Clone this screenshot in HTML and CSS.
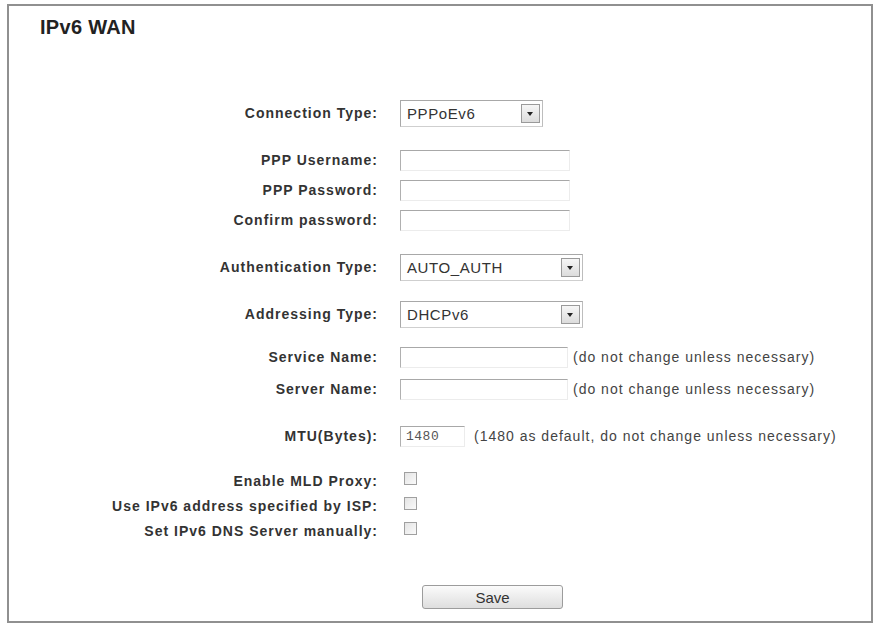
FILE: index.html
```html
<!DOCTYPE html>
<html lang="en">
<head>
    <meta charset="UTF-8" />
    <title>IPv6 WAN</title>
    <link rel="stylesheet" href="styles.css">
</head>
<body>

<div class="frame">
    <h2 class="title">IPv6 WAN</h2>

    <div class="form">
        <div class="row">
            <label class="label">Connection Type:</label>
            <div class="select select-short">
                <span class="select-value">PPPoEv6</span>
                <span class="select-arrow"></span>
            </div>
        </div>

        <div class="row gap-lg">
            <label class="label">PPP Username:</label>
            <input class="text" type="text" />
        </div>
        <div class="row">
            <label class="label">PPP Password:</label>
            <input class="text" type="password" />
        </div>
        <div class="row">
            <label class="label">Confirm password:</label>
            <input class="text" type="password" />
        </div>

        <div class="row gap-lg">
            <label class="label">Authentication Type:</label>
            <div class="select">
                <span class="select-value">AUTO_AUTH</span>
                <span class="select-arrow"></span>
            </div>
        </div>

        <div class="row gap-lg">
            <label class="label">Addressing Type:</label>
            <div class="select">
                <span class="select-value">DHCPv6</span>
                <span class="select-arrow"></span>
            </div>
        </div>

        <div class="row gap-md">
            <label class="label">Service Name:</label>
            <input class="text text-name" type="text" />
            <span class="hint">(do not change unless necessary)</span>
        </div>
        <div class="row gap-xs">
            <label class="label">Server Name:</label>
            <input class="text text-name" type="text" />
            <span class="hint">(do not change unless necessary)</span>
        </div>

        <div class="row gap-lg">
            <label class="label">MTU(Bytes):</label>
            <input class="text text-mtu" type="text" value="1480" />
            <span class="hint hint-mtu">(1480 as default, do not change unless necessary)</span>
        </div>

        <div class="row row-check gap-lg">
            <label class="label">Enable MLD Proxy:</label>
            <span class="check"></span>
        </div>
        <div class="row row-check">
            <label class="label">Use IPv6 address specified by ISP:</label>
            <span class="check"></span>
        </div>
        <div class="row row-check">
            <label class="label">Set IPv6 DNS Server manually:</label>
            <span class="check"></span>
        </div>

        <div class="actions">
            <button class="save">Save</button>
        </div>
    </div>
</div>

</body>
</html>
```

FILE: styles.css
```css
* {
    box-sizing: border-box;
}
body {
    margin: 0;
    background: #ffffff;
    font-family: "Liberation Sans", Arial, sans-serif;
    color: #333;
}
.frame {
    margin: 4px 3px 2px 7px;
    height: 619px;
    border: 2px solid #909090;
    background: #fff;
}
.title {
    margin: 11px 0 0 31px;
    font-size: 20px;
    line-height: 20px;
    font-weight: 700;
    letter-spacing: 0.3px;
    color: #222;
}
.form {
    margin-top: 61px;
}
.row {
    display: flex;
    align-items: center;
    height: 30px;
}
.row-check {
    height: 25px;
}
.gap-lg {
    margin-top: 17px;
}
.gap-md {
    margin-top: 13px;
}
.gap-xs {
    margin-top: 2px;
}
.label {
    flex-shrink: 0;
    width: 391px;
    padding-right: 22px;
    text-align: right;
    font-size: 14px;
    font-weight: 700;
    letter-spacing: 1px;
    color: #333;
}

/* text fields: sunken look, dark top/left edge */
.text {
    width: 170px;
    height: 21px;
    margin: 0;
    padding: 1px 5px;
    border: 1px solid;
    border-color: #a8a8a8 #ececec #ececec #b0b0b0;
    background: #fff;
    font-family: "Liberation Sans", Arial, sans-serif;
    font-size: 13px;
    outline: none;
}
.text-name {
    width: 168px;
}
.text-mtu {
    width: 65px;
    font-family: "Liberation Mono", "Courier New", monospace;
    font-size: 13px;
    color: #555;
    letter-spacing: 0.5px;
}
.hint {
    margin-left: 5px;
    font-size: 14px;
    letter-spacing: 1px;
    color: #444;
}
.hint-mtu {
    margin-left: 9px;
}

/* drop-down box */
.select {
    display: flex;
    align-items: center;
    justify-content: space-between;
    width: 183px;
    height: 27px;
    padding: 0 2px 0 6px;
    border: 1px solid;
    border-color: #a8a8a8 #bdbdbd #cfcfcf #a8a8a8;
    background: #fff;
}
.select-short {
    width: 143px;
}
.select-value {
    font-size: 15px;
    letter-spacing: 0.6px;
    color: #333;
}
.select-arrow {
    position: relative;
    width: 19px;
    height: 19px;
    border: 1px solid #9a9a9a;
    background: linear-gradient(#f6f6f6, #dcdcdc);
}
.select-arrow::after {
    content: "";
    position: absolute;
    left: 5px;
    top: 7px;
    border-left: 3.5px solid transparent;
    border-right: 3.5px solid transparent;
    border-top: 4px solid #222;
}

.check {
    width: 13px;
    height: 13px;
    margin-left: 4px;
    margin-top: -4px;
    border: 1px solid #a0a0a0;
    background: linear-gradient(135deg, #e4e4e4, #fafafa);
}

.actions {
    margin-top: 42px;
    padding-left: 413px;
}
.save {
    width: 141px;
    height: 24px;
    border: 1px solid #9c9c9c;
    border-radius: 3px;
    background: linear-gradient(#fbfbfb, #dedede);
    font-family: "Liberation Sans", Arial, sans-serif;
    font-size: 15px;
    color: #333;
    cursor: pointer;
}
```
